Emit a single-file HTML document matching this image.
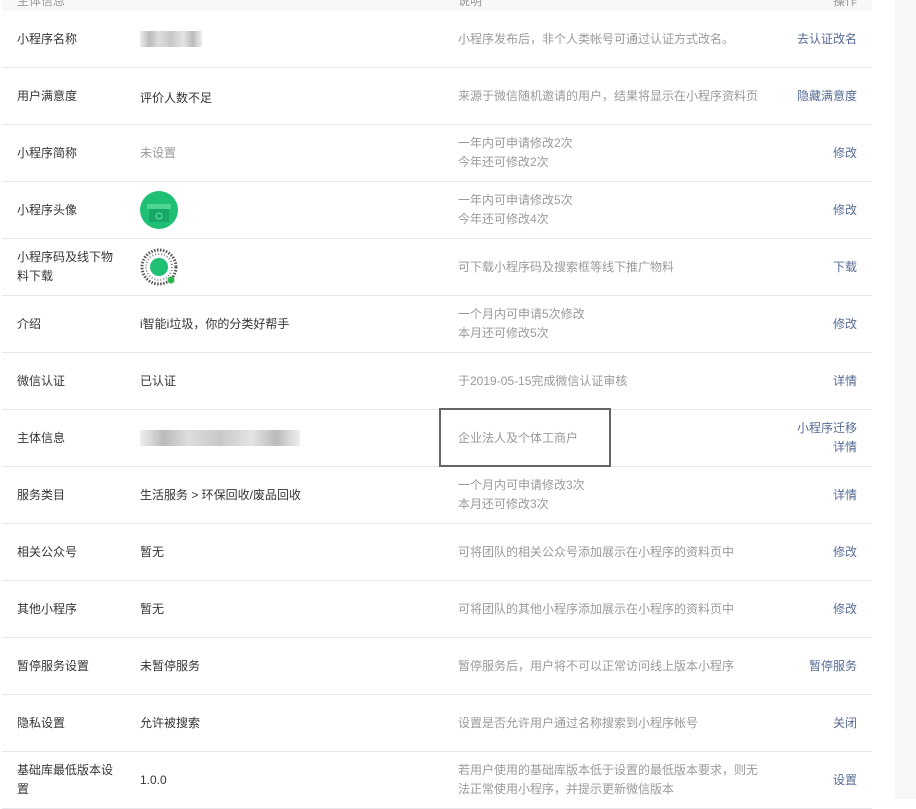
<!DOCTYPE html>
<html><head><meta charset="utf-8"><style>
*{margin:0;padding:0;box-sizing:border-box}
body{width:916px;height:799px;overflow:hidden;background:#fff;font-family:"Liberation Sans","Noto Sans CJK SC",sans-serif;font-size:12px;color:#353535;position:relative}
.side{position:absolute;left:895px;top:0;width:21px;height:799px;background:#f6f7f9}
.hd{position:absolute;left:2px;top:0;width:870px;height:11px;background:#f6f8f9;overflow:hidden}
.hd span{position:absolute;top:-8px;color:#999}
.row{position:absolute;left:2px;width:870px;height:57px;border-bottom:1px solid #e7e7eb}
.c{position:absolute;top:0;height:56px;display:flex;align-items:center;line-height:19px}
.l{left:15px;width:100px}
.v{left:138px}
.d{left:456px;width:305px;color:#9a9a9a}
.a{right:15px;color:#576b95;text-align:right}
.g{color:#9a9a9a}
.blur{display:inline-block;height:16px;background:linear-gradient(90deg,#eee,#bbb 15%,#ddd 30%,#c8c8c8 50%,#e4e4e4 70%,#bbb 85%,#eee)}
.box{position:absolute;left:439px;top:408px;width:172px;height:59px;border:2px solid #666}
</style></head><body>
<div class="side"></div>
<div class="hd"><span style="left:15px">主体信息</span><span style="left:456px">说明</span><span style="right:15px">操作</span></div>

<div class="row" style="top:11px"><div class="c l">小程序名称</div><div class="c v"><span class="blur" style="width:62px"></span></div><div class="c d">小程序发布后，非个人类帐号可通过认证方式改名。</div><div class="c a">去认证改名</div></div>
<div class="row" style="top:68px"><div class="c l">用户满意度</div><div class="c v" style="top:2px">评价人数不足</div><div class="c d">来源于微信随机邀请的用户，结果将显示在小程序资料页</div><div class="c a">隐藏满意度</div></div>
<div class="row" style="top:125px"><div class="c l">小程序简称</div><div class="c v g">未设置</div><div class="c d">一年内可申请修改2次<br>今年还可修改2次</div><div class="c a">修改</div></div>
<div class="row" style="top:182px"><div class="c l">小程序头像</div><div class="c v"><svg width="38" height="38" viewBox="0 0 38 38"><circle cx="19" cy="19" r="19" fill="#1fbf74"/><rect x="7" y="13" width="24" height="5" fill="#4fd496"/><rect x="9" y="18" width="20" height="13" fill="#17a866"/><circle cx="19" cy="25" r="3" fill="none" stroke="#6fe0a8" stroke-width="1"/></svg></div><div class="c d">一年内可申请修改5次<br>今年还可修改4次</div><div class="c a">修改</div></div>
<div class="row" style="top:239px"><div class="c l">小程序码及线下物料下载</div><div class="c v"><svg width="38" height="38" viewBox="0 0 38 38"><circle cx="19" cy="19" r="17" fill="none" stroke="#555" stroke-width="3" stroke-dasharray="1.5 1.5"/><circle cx="19" cy="19" r="13" fill="none" stroke="#888" stroke-width="2" stroke-dasharray="1 2"/><circle cx="19" cy="19" r="9" fill="#1fbf74"/><circle cx="31" cy="32" r="3.5" fill="#2cb84a"/></svg></div><div class="c d">可下载小程序码及搜索框等线下推广物料</div><div class="c a">下载</div></div>
<div class="row" style="top:296px"><div class="c l">介绍</div><div class="c v">i智能i垃圾，你的分类好帮手</div><div class="c d">一个月内可申请5次修改<br>本月还可修改5次</div><div class="c a">修改</div></div>
<div class="row" style="top:353px"><div class="c l">微信认证</div><div class="c v">已认证</div><div class="c d">于2019-05-15完成微信认证审核</div><div class="c a">详情</div></div>
<div class="row" style="top:410px"><div class="c l">主体信息</div><div class="c v"><span class="blur" style="width:160px"></span></div><div class="c d">企业法人及个体工商户</div><div class="c a">小程序迁移<br>详情</div></div>
<div class="row" style="top:467px"><div class="c l">服务类目</div><div class="c v">生活服务 &gt; 环保回收/废品回收</div><div class="c d">一个月内可申请修改3次<br>本月还可修改3次</div><div class="c a">详情</div></div>
<div class="row" style="top:524px"><div class="c l">相关公众号</div><div class="c v">暂无</div><div class="c d">可将团队的相关公众号添加展示在小程序的资料页中</div><div class="c a">修改</div></div>
<div class="row" style="top:581px"><div class="c l">其他小程序</div><div class="c v">暂无</div><div class="c d">可将团队的其他小程序添加展示在小程序的资料页中</div><div class="c a">修改</div></div>
<div class="row" style="top:638px"><div class="c l">暂停服务设置</div><div class="c v">未暂停服务</div><div class="c d">暂停服务后，用户将不可以正常访问线上版本小程序</div><div class="c a">暂停服务</div></div>
<div class="row" style="top:695px"><div class="c l">隐私设置</div><div class="c v">允许被搜索</div><div class="c d">设置是否允许用户通过名称搜索到小程序帐号</div><div class="c a">关闭</div></div>
<div class="row" style="top:752px"><div class="c l">基础库最低版本设置</div><div class="c v">1.0.0</div><div class="c d">若用户使用的基础库版本低于设置的最低版本要求，则无法正常使用小程序，并提示更新微信版本</div><div class="c a">设置</div></div>
<div class="box"></div>
</body></html>
